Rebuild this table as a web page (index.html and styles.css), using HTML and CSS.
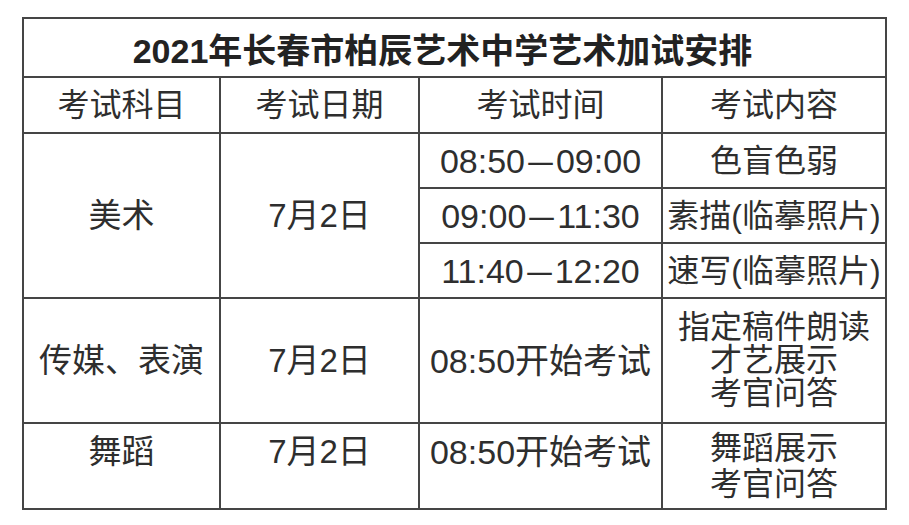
FILE: index.html
```html
<!DOCTYPE html>
<html lang="zh-CN">
<head>
<meta charset="utf-8">
<title>2021年长春市柏辰艺术中学艺术加试安排</title>
<link rel="stylesheet" href="styles.css">
</head>
<body>
<div class="sheet">
  <div class="cell title">2021年长春市柏辰艺术中学艺术加试安排</div>

  <div class="cell head">考试科目</div>
  <div class="cell head">考试日期</div>
  <div class="cell head">考试时间</div>
  <div class="cell head">考试内容</div>

  <div class="cell subject span3">美术</div>
  <div class="cell date span3">7月2日</div>
  <div class="cell time">08:50<span class="dash">–</span>09:00</div>
  <div class="cell content">色盲色弱</div>
  <div class="cell time">09:00<span class="dash">–</span>11:30</div>
  <div class="cell content">素描(临摹照片)</div>
  <div class="cell time">11:40<span class="dash">–</span>12:20</div>
  <div class="cell content">速写(临摹照片)</div>

  <div class="cell subject">传媒、表演</div>
  <div class="cell date">7月2日</div>
  <div class="cell time">08:50开始考试</div>
  <div class="cell content multi">指定稿件朗读<br>才艺展示<br>考官问答</div>

  <div class="cell subject top">舞蹈</div>
  <div class="cell date top">7月2日</div>
  <div class="cell time top">08:50开始考试</div>
  <div class="cell content multi wide">舞蹈展示<br>考官问答</div>
</div>
</body>
</html>
```

FILE: styles.css
```css
html, body {
  margin: 0;
  padding: 0;
  background: #ffffff;
}

body {
  font-family: "Liberation Sans", "Noto Sans CJK SC", sans-serif;
  color: #2e2e2e;
}

.sheet {
  display: grid;
  grid-template-columns: 195px 197px 241px 222px;
  grid-template-rows: 57px 54px 53px 53px 53px 123px 84px;
  gap: 2px;
  padding: 2px;
  background: #454545;
  width: 865px;
  box-sizing: border-box;
  margin: 17px 0 0 22px;
}

.cell {
  background: #ffffff;
  display: flex;
  align-items: center;
  justify-content: center;
  text-align: center;
  font-size: 33px;
  line-height: 1;
  white-space: nowrap;
}

.title {
  grid-column: 1 / span 4;
  font-size: 34px;
  font-weight: bold;
  color: #222222;
  padding: 6px 24px 0 0;
}

.head {
  font-size: 32px;
}

.span3 {
  grid-row: span 3;
}

.time {
  font-size: 34px;
}

.dash {
  display: inline-block;
  margin: 0 6px;
  transform: scaleX(1.3) translateY(-1px);
}

.content {
  font-size: 32px;
}

.multi {
  line-height: 33px;
}

.multi.wide {
  line-height: 36px;
}

.top {
  align-items: flex-start;
  padding-top: 10px;
  line-height: 36px;
}
```
